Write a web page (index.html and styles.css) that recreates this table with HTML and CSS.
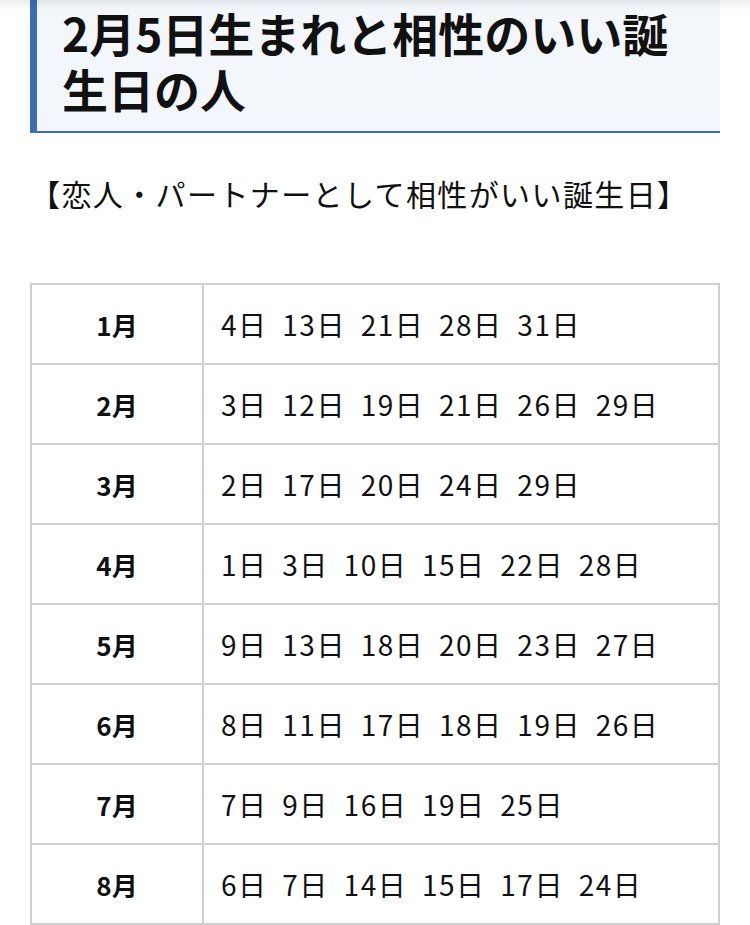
FILE: index.html
```html
<!DOCTYPE html>
<html lang="ja">
<head>
<meta charset="utf-8">
<link rel="stylesheet" href="styles.css">
</head>
<body>
<div class="topshade"></div>
<main class="content">
  <h2 class="heading">2月5日生まれと相性のいい誕生日の人</h2>
  <p class="lead">【恋人・パートナーとして相性がいい誕生日】</p>
  <table class="days">
    <tbody>
      <tr><th>1月</th><td>4日 13日 21日 28日 31日</td></tr>
      <tr><th>2月</th><td>3日 12日 19日 21日 26日 29日</td></tr>
      <tr><th>3月</th><td>2日 17日 20日 24日 29日</td></tr>
      <tr><th>4月</th><td>1日 3日 10日 15日 22日 28日</td></tr>
      <tr><th>5月</th><td>9日 13日 18日 20日 23日 27日</td></tr>
      <tr><th>6月</th><td>8日 11日 17日 18日 19日 26日</td></tr>
      <tr><th>7月</th><td>7日 9日 16日 19日 25日</td></tr>
      <tr><th>8月</th><td>6日 7日 14日 15日 17日 24日</td></tr>
    </tbody>
  </table>
</main>
</body>
</html>
```

FILE: styles.css
```css
html, body {
  margin: 0;
  padding: 0;
  background: #fff;
}
body {
  font-family: "Noto Sans CJK JP", "Noto Sans", sans-serif;
  color: #111;
  overflow: hidden;
}
.topshade {
  position: fixed;
  top: 0;
  left: 0;
  right: 0;
  height: 10px;
  background: linear-gradient(to bottom, rgba(0,0,0,0.07), rgba(0,0,0,0));
  pointer-events: none;
}
.content {
  padding: 0 30px;
}
.heading {
  margin: 0;
  padding: 4px 20px 15px 25px;
  background: #f3f6fb;
  border-left: 7px solid #3d6db5;
  border-bottom: 2px solid #3d6db5;
  font-size: 46px;
  line-height: 56px;
  font-weight: 700;
}
.lead {
  margin: 40px 0 0 0;
  font-size: 30px;
  line-height: 40px;
  letter-spacing: 1.4px;
}
.days {
  margin-top: 70px;
  width: 100%;
  border-collapse: collapse;
}
.days th, .days td {
  border: 2px solid #cfcfcf;
  height: 78px;
  padding: 0;
  vertical-align: middle;
}
.days th {
  width: 170px;
  font-size: 26px;
  font-weight: 700;
  text-align: center;
}
.days td {
  padding-left: 17px;
  font-size: 28px;
  font-weight: 400;
  text-align: left;
  letter-spacing: 1.5px;
  word-spacing: 7px;
}
```
